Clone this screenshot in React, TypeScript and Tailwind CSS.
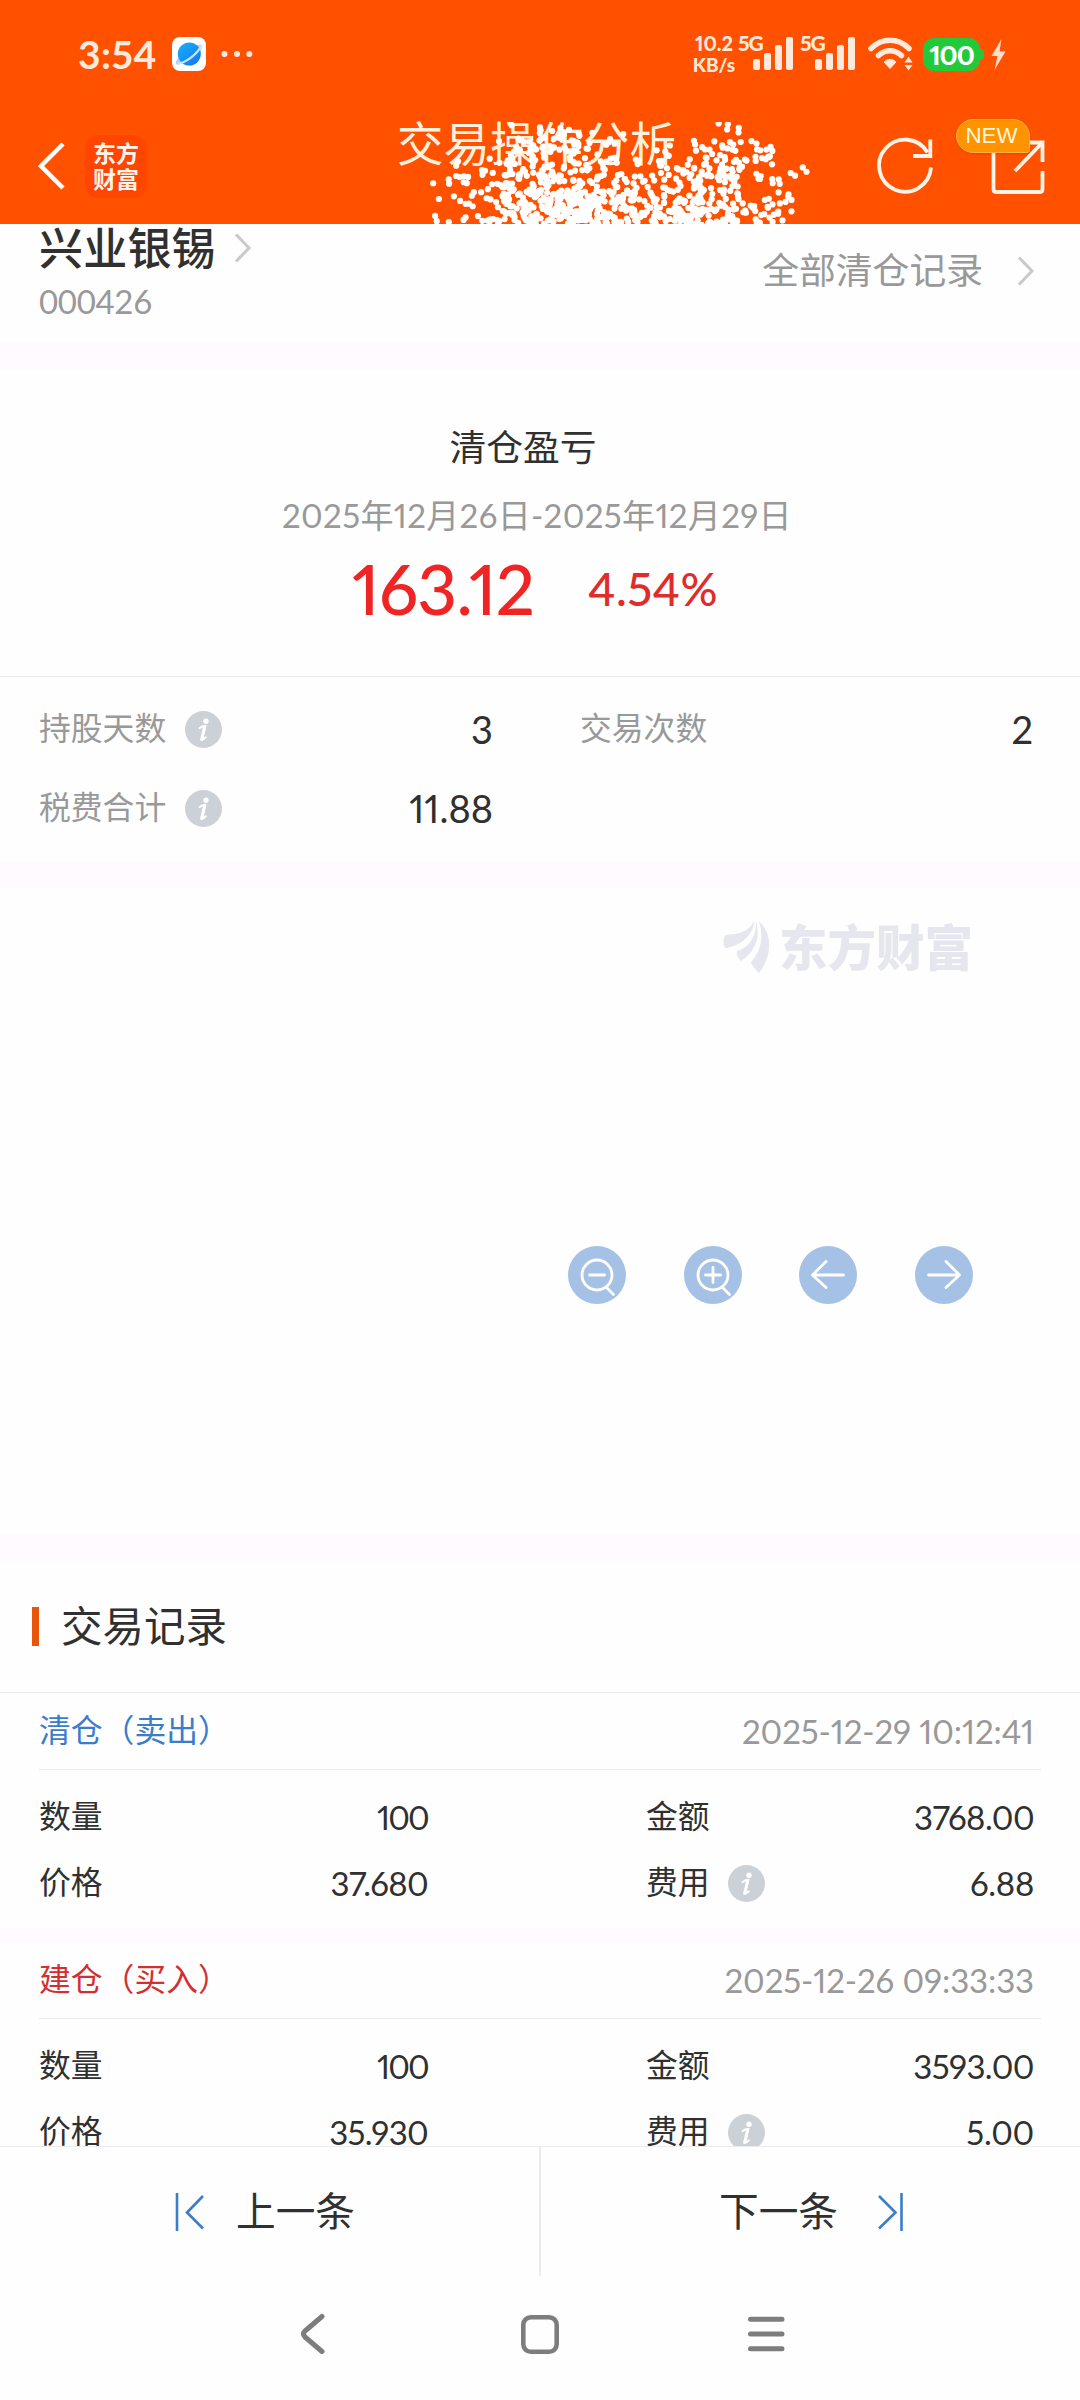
import type { ReactNode } from 'react';

/* Dots per 20x17 cell of the loading spray, top row first. */
const DENSITY = [
  [0, 0, 0, 0, 1, 3, 6, 3, 1, 1, 0, 0, 0, 0, 1, 3, 0, 0, 0],
  [0, 0, 0, 1, 5, 9, 6, 8, 3, 2, 0, 1, 3, 4, 5, 5, 3, 2, 0],
  [0, 1, 1, 4, 6, 8, 4, 7, 4, 4, 3, 2, 3, 6, 8, 6, 3, 4, 1],
  [1, 5, 3, 7, 9, 11, 10, 9, 6, 7, 6, 4, 7, 9, 9, 8, 2, 2, 1],
  [1, 2, 4, 5, 13, 13, 16, 22, 18, 13, 9, 9, 8, 10, 9, 6, 3, 4, 2],
  [1, 1, 2, 8, 10, 12, 16, 26, 18, 13, 12, 11, 12, 15, 11, 8, 6, 5, 1],
];

function sprayDots() {
  let seed = 20251;
  const next = () => {
    seed = (seed * 1103515245 + 12345) % 2147483648;
    return seed / 2147483648;
  };
  const dots: { x: number; y: number }[] = [];
  DENSITY.forEach((row, r) =>
    row.forEach((n, c) => {
      for (let i = 0; i < n; i++) {
        const x = c * 20 + next() * 20;
        const y = r * 17 + next() * 17;
        dots.push({ x, y });
        // some dots drag a close neighbour along, which forms short chains
        if (next() < 0.4) dots.push({ x: x + (next() - 0.5) * 9, y: y + (next() - 0.3) * 9 });
      }
    }),
  );
  return dots;
}

const DOTS = sprayDots();

function Spray() {
  return (
    <svg className="absolute left-[425px] top-[122px]" width="390" height="102" viewBox="0 0 390 102">
      {DOTS.map((d, i) => (
        <circle key={i} cx={d.x} cy={d.y} r="3.1" fill="#fff" />
      ))}
    </svg>
  );
}

function Signal() {
  return (
    <svg width="42" height="34" viewBox="0 0 42 34" fill="#ffe9dc">
      <rect x="1" y="22" width="7" height="11" rx="2" />
      <rect x="12" y="16" width="7" height="17" rx="2" />
      <rect x="23" y="8" width="7" height="25" rx="2" />
      <rect x="34" y="0" width="7" height="33" rx="2" />
    </svg>
  );
}

function StatusBar() {
  return (
    <div className="flex h-[108px] items-center pl-[78px] pr-[74px] text-[#ffe9dc]">
      <span className="w-[94px] text-[39px] font-bold leading-none tracking-[0.4px]">3:54</span>
      <svg width="34" height="34" viewBox="0 0 34 34">
        <defs>
          <linearGradient id="planet" x1="0" y1="0" x2="1" y2="1">
            <stop offset="0" stopColor="#13b4fb" />
            <stop offset="1" stopColor="#1673ee" />
          </linearGradient>
        </defs>
        <rect width="34" height="34" rx="8" fill="#fff" />
        <path d="M4 27C3 23 8 19 14 15C21 10 28 6 30 8C31 11 28 16 21 20C14 25 7 29 4 27Z" fill="#b9cdfa" />
        <circle cx="17.3" cy="17" r="11.5" fill="url(#planet)" />
        <path d="M5.500 26.500C12 26.500 25 18 29.500 8.500" stroke="#cfe3ff" strokeWidth="2.200" fill="none" />
      </svg>
      <svg className="ml-[15px]" width="34" height="8" viewBox="0 0 34 8" fill="#ffe9dc">
        <circle cx="3.500" cy="4" r="3" />
        <circle cx="16" cy="4" r="3" />
        <circle cx="28.300" cy="4" r="3" />
      </svg>
      <div className="ml-auto flex items-center">
        <div className="flex w-[48px] flex-col items-center text-[20px] font-black leading-[22px]">
          <span>10.2</span>
          <span className="text-[19px]">KB/s</span>
        </div>
        <div className="relative w-[62px] pl-[14px]">
          <span className="absolute left-0 top-[-5px] text-[21px] font-black leading-[22px] tracking-[-1px]">5G</span>
          <Signal />
        </div>
        <div className="relative w-[62px] pl-[14px]">
          <span className="absolute left-0 top-[-5px] text-[21px] font-black leading-[22px] tracking-[-1px]">5G</span>
          <Signal />
        </div>
        <svg className="ml-[6px]" width="48" height="34" viewBox="0 0 48 34" fill="none" stroke="#ffe9dc">
          <path d="M3 11.500C14 0.500 30 0.500 41 11.500" strokeWidth="5.500" strokeLinecap="round" />
          <path d="M10.500 18.500C17 12 27 12 33.500 18.500" strokeWidth="5.500" strokeLinecap="round" />
          <path d="M16 25C19.500 21.500 24.500 21.500 28 25L22 31.500Z" fill="#ffe9dc" strokeWidth="1" />
          <path d="M36.500 25.500L40.500 19.500L44.500 25.500ZM36.500 28L40.500 33.500L44.500 28Z" fill="#ffe9dc" stroke="none" />
        </svg>
        <div className="relative ml-[7px] flex h-[33px] w-[57px] items-center justify-center rounded-[11px] bg-[#22c93a]">
          <span className="text-[27px] font-black leading-none tracking-[-0.9px] text-white">100</span>
          <span className="absolute -right-[4px] top-[11px] h-[11px] w-[5px] rounded-r-[4px] bg-[#22c93a]" />
        </div>
        <svg className="ml-[11px]" width="15" height="31" viewBox="0 0 15 31" fill="#ffdccb">
          <path d="M10.500 0L0.500 17H6.500L3.500 31L14.500 12.500H8.500Z" />
        </svg>
      </div>
    </div>
  );
}

function TitleBar() {
  return (
    <div className="flex h-[116px] items-center pl-[36px] pr-[32px]">
      <svg width="32" height="50" viewBox="0 0 32 50" fill="none" stroke="#fff" strokeWidth="4.500">
        <path d="M27 3L5 25L27 47" />
      </svg>
      <div className="ml-[17px] flex h-[63px] w-[62px] items-center justify-center rounded-[13px] bg-[#ff4600]">
        <span className="block w-[46px] break-all text-[23px] font-bold leading-[26px] text-[#fff4ec]">东方财富</span>
      </div>
      <h1 className="ml-[250px] -translate-y-[23px] whitespace-nowrap text-[46.500px] font-normal leading-none text-[#fff0dd]">
        交易操作分析
      </h1>
      <div className="relative ml-auto flex items-center">
        <svg width="62" height="62" viewBox="0 0 62 62" fill="none" stroke="#fff3e8" strokeWidth="3.800">
          <path d="M57 32.500A26 26 0 1 1 53.500 17.500" />
          <path d="M56.300 4.500V21H39" />
        </svg>
        <svg className="ml-[55px]" width="57" height="62" viewBox="0 0 57 62" fill="none" stroke="#fff3e8" strokeWidth="3.800">
          <path d="M30 7.500H51.500V27M51 8L24 36" />
          <path d="M2.500 12V54Q2.500 57 5 57H49Q51.500 57 51.500 54V36" />
        </svg>
        <span className="absolute left-[82px] top-[-16px] flex h-[34px] w-[74px] items-center justify-center rounded-[17px] rounded-br-[3px] border border-[#ffae42] bg-[#ff9400] pr-[3px] pt-px font-['Liberation_Sans',sans-serif] text-[22.300px] leading-none text-[#fff6d8] shadow-sm">
          NEW
        </span>
      </div>
    </div>
  );
}

function Chevron({ className }: { className?: string }) {
  return (
    <svg className={className} width="18" height="32" viewBox="0 0 18 32" fill="none" stroke="#c9c9c9" strokeWidth="3">
      <path d="M2 2.500L15 16L2 29.500" />
    </svg>
  );
}

function Info({ className }: { className?: string }) {
  return (
    <svg className={className} width="37" height="37" viewBox="0 0 37 37">
      <circle cx="18.500" cy="18.500" r="18.500" fill="#cbd1d6" />
      <circle cx="21" cy="10.200" r="2.700" fill="#fff" />
      <path d="M14.500 17.200C16.500 15.500 18.500 14.800 20.300 15L17.200 28C17 29.300 18.500 28.500 20.800 26.300" fill="none" stroke="#fff" strokeWidth="2" strokeLinecap="round" />
      <path d="M19.500 16L16.600 28.500" stroke="#fff" strokeWidth="3" strokeLinecap="round" />
    </svg>
  );
}

const Band = () => <div className="h-[27px] shrink-0 bg-[#fefaff]" />;

function RoundButton({ children, label }: { children: ReactNode; label: string }) {
  return (
    <button aria-label={label} className="flex h-[58px] w-[58px] items-center justify-center rounded-full bg-[#a5c1e6]">
      <svg width="58" height="58" viewBox="0 0 58 58" fill="none" stroke="#fff" strokeWidth="2.800" strokeLinecap="round" strokeLinejoin="round">
        {children}
      </svg>
    </button>
  );
}

type Trade = { kind: string; tone: string; time: string; qty: string; price: string; amount: string; fee: string };

const TRADES: Trade[] = [
  { kind: '清仓（卖出）', tone: 'text-[#3b7ccb]', time: '2025-12-29 10:12:41', qty: '100', price: '37.680', amount: '3768.00', fee: '6.88' },
  { kind: '建仓（买入）', tone: 'text-[#d32f2f]', time: '2025-12-26 09:33:33', qty: '100', price: '35.930', amount: '3593.00', fee: '5.00' },
];

function TradeCard({ t }: { t: Trade }) {
  return (
    <article className="h-[235px] shrink-0 text-[31.800px] leading-none text-[#303030]">
      <header className="mx-[39px] flex h-[77px] items-center justify-between border-b border-[#ececec] pr-[7px]">
        <span className={t.tone}>{t.kind}</span>
        <time className="text-[33px] tracking-[-0.1px] text-[#999]">{t.time}</time>
      </header>
      <div className="grid grid-cols-[389px_218px_388px] pl-[39px] pt-[14px]">
        <div className="flex h-[66px] items-center justify-between">
          <span>数量</span>
          <span className="text-[33px] tracking-[-1.800px]">{t.qty}</span>
        </div>
        <span />
        <div className="flex h-[66px] items-center justify-between">
          <span>金额</span>
          <span className="text-[33px] tracking-[-0.600px]">{t.amount}</span>
        </div>
        <div className="flex h-[66px] items-center justify-between">
          <span>价格</span>
          <span className="text-[33px] tracking-[-0.700px]">{t.price}</span>
        </div>
        <span />
        <div className="flex h-[66px] items-center">
          <span>费用</span>
          <Info className="ml-[18px]" />
          <span className="ml-auto text-[33px] tracking-[-0.300px]">{t.fee}</span>
        </div>
      </div>
    </article>
  );
}

export default function App() {
  return (
    <div lang="zh-CN" className="flex h-[2400px] w-[1080px] flex-col overflow-hidden bg-[#fefefe] font-['Lato','Noto_Sans_CJK_SC',sans-serif] proportional-nums text-[#303030]">
      <div className="relative h-[224px] shrink-0 bg-[#ff5100]">
        <StatusBar />
        <TitleBar />
        <Spray />
      </div>

      <main className="flex h-[1922px] flex-col overflow-hidden">
        <section className="flex h-[119px] shrink-0 justify-between pl-[39px] pr-[45px]">
          <div>
            <div className="flex h-[48px] items-center">
              <span className="text-[44px] font-medium leading-none tracking-[0.2px]">兴业银锡</span>
              <Chevron className="ml-[18px]" />
            </div>
            <div className="mt-[12px] text-[33px] leading-[34px] tracking-[-0.3px] tabular-nums text-[#999]">000426</div>
          </div>
          <div className="flex h-[93px] items-center text-[36.800px] leading-none text-[#999]">
            全部清仓记录
            <Chevron className="ml-[34px]" />
          </div>
        </section>

        <Band />

        <section className="flex h-[306px] shrink-0 flex-col items-center">
          <h2 className="mt-[57px] -translate-x-[17px] text-[36.800px] font-normal leading-[40px]">清仓盈亏</h2>
          <p className="mt-[28px] -translate-x-[3px] text-[33px] leading-[40px] tracking-[0.350px] text-[#999]">2025年12月26日-2025年12月29日</p>
          <div className="flex w-full items-center pl-[352px] pt-[14px] leading-[80px]">
            <span className="w-[236px] text-[69px] font-medium tracking-[-0.700px] text-[#ee2524]">163.12</span>
            <span className="text-[46px] font-medium tracking-[0.400px] text-[#e02c2b]">4.54%</span>
          </div>
        </section>

        <section className="grid h-[185px] shrink-0 grid-cols-[454px_87px_453px] content-start border-t border-[#ececec] px-[39px] pt-[13px] text-[31.800px] leading-none text-[#999]">
          <div className="flex h-[79px] items-center">
            <span className="-translate-y-px">持股天数</span>
            <Info className="ml-[19px]" />
            <span className="ml-auto -translate-y-px text-[38px] text-[#303030]">3</span>
          </div>
          <span />
          <div className="flex h-[79px] items-center justify-between">
            <span className="-translate-y-px">交易次数</span>
            <span className="-translate-y-px text-[38px] text-[#303030]">2</span>
          </div>
          <div className="flex h-[79px] items-center">
            <span className="-translate-y-px">税费合计</span>
            <Info className="ml-[19px]" />
            <span className="ml-auto -translate-y-px text-[38px] text-[#303030]">11.88</span>
          </div>
        </section>

        <Band />

        <section className="flex h-[646px] shrink-0 flex-col items-end pr-[107px] pt-[32px]">
          <div className="flex h-[54px] items-center text-[48.500px] font-black leading-none text-[#e6e6ee]">
            <svg className="mr-[8px]" width="48" height="54" viewBox="0 0 48 54" fill="#e6e6ee">
              <path d="M31 1C31 14 17 27 2 28C0 23 0 18 3 15C14 14 25 13 31 1Z" />
              <path d="M33 1C38 18 32 32 18 41C15 38 13 34 14 31C25 28 34 17 33 1Z" />
              <path d="M36 1C52 17 47 38 36 53C33 50 29 46 28 42C38 31 41 17 36 1Z" />
            </svg>
            东方财富
          </div>
          <div className="mt-[272px] flex gap-[57.700px]">
            <RoundButton label="缩小">
              <circle cx="29" cy="29" r="15" />
              <path d="M21.500 29H36.500M38.500 41.500L45.500 48.500" />
            </RoundButton>
            <RoundButton label="放大">
              <circle cx="29" cy="29" r="15" />
              <path d="M21.500 29H36.500M29 21.500V36.500M38.500 41.500L45.500 48.500" />
            </RoundButton>
            <RoundButton label="左移">
              <path d="M44.500 29H13.500M27 15.500L13.500 29L27 41.500" />
            </RoundButton>
            <RoundButton label="右移">
              <path d="M13.500 29H44.500M31 15.500L44.500 29L31 41.500" />
            </RoundButton>
          </div>
        </section>

        <Band />

        <section className="flex h-[132px] shrink-0 items-center border-b border-[#ececec] pl-[32px]">
          <span className="h-[39px] w-[7px] bg-[#e8560c]" />
          <h2 className="ml-[22px] text-[41.500px] font-normal leading-none">交易记录</h2>
        </section>
        <TradeCard t={TRADES[0]} />
        <div className="h-[14px] shrink-0 bg-[#fefaff]" />
        <TradeCard t={TRADES[1]} />
      </main>

      <nav className="flex h-[130px] shrink-0 border-t border-[#ececec] text-[39.700px] leading-none">
        <button className="flex h-full w-[541px] items-center border-r-2 border-[#ececec] pl-[175px]">
          <svg width="30" height="40" viewBox="0 0 30 40" fill="none" stroke="#3b7ccb" strokeWidth="2.600">
            <path d="M2 1V39M28 4L12 20.500L28 36.500" />
          </svg>
          <span className="ml-[31px] -translate-y-px">上一条</span>
        </button>
        <button className="flex h-full flex-1 items-center pl-[178px]">
          <span className="-translate-y-px">下一条</span>
          <svg className="ml-[40px]" width="30" height="40" viewBox="0 0 30 40" fill="none" stroke="#3b7ccb" strokeWidth="2.600">
            <path d="M23.500 1V39M1 4L17.500 20.500L1 36.500" />
          </svg>
        </button>
      </nav>

      <div className="flex h-[116px] shrink-0 items-center pl-[298px]">
        <svg width="28" height="42" viewBox="0 0 28 42" fill="none" stroke="#7d7d7d" strokeWidth="5" strokeLinecap="round" strokeLinejoin="round">
          <path d="M24 3.500L7 18Q4 21 7 24L24 38.500" />
        </svg>
        <svg className="ml-[195px]" width="38" height="39" viewBox="0 0 38 39" fill="none" stroke="#7d7d7d" strokeWidth="4.600">
          <rect x="2.300" y="2.300" width="33.400" height="34.400" rx="7.500" />
        </svg>
        <svg className="ml-[189px]" width="37" height="36" viewBox="0 0 37 36" stroke="#7d7d7d" strokeWidth="5" strokeLinecap="round">
          <path d="M2.500 3.300H34M2.500 18H34M2.500 32.700H34" />
        </svg>
      </div>
    </div>
  );
}
